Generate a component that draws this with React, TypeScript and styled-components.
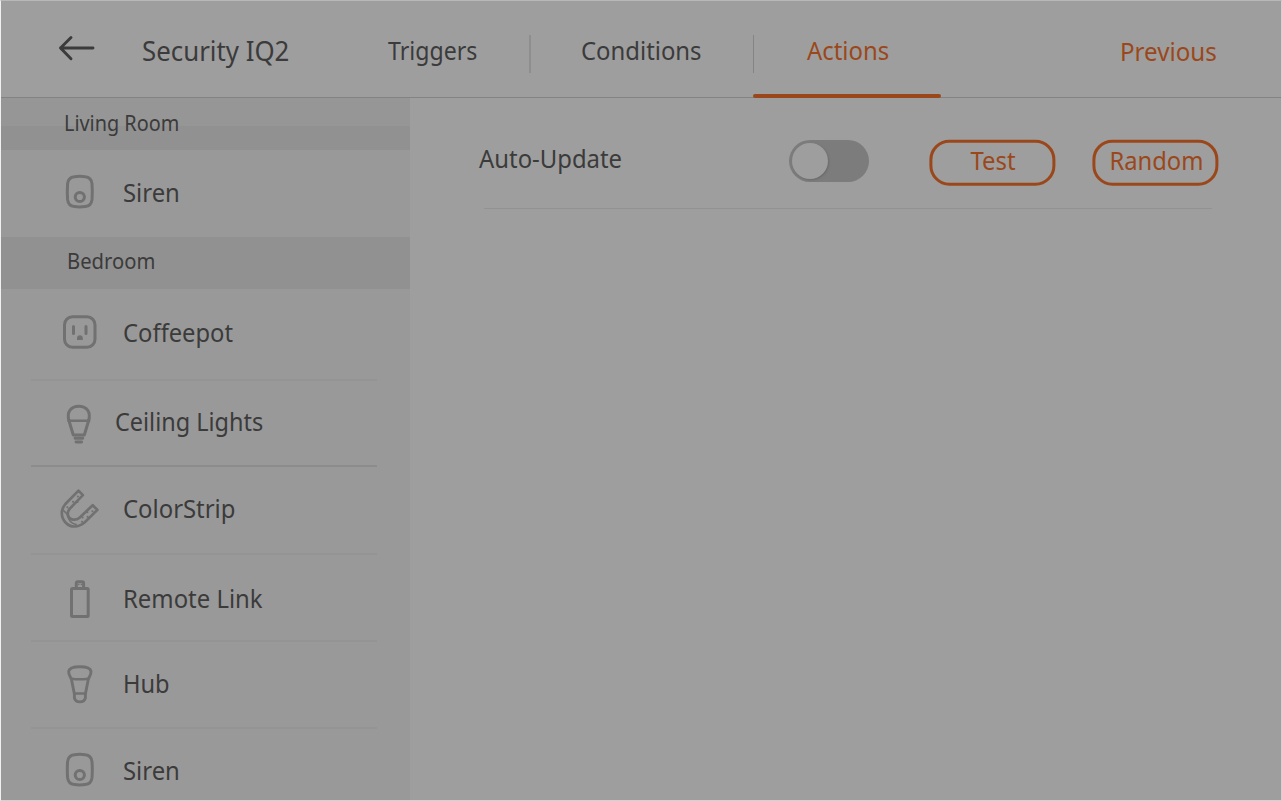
import React from 'react';
import styled, { createGlobalStyle } from 'styled-components';

const GlobalStyle = createGlobalStyle`
  * { box-sizing: border-box; }
  html, body { margin: 0; padding: 0; overflow: hidden; }
  body { background: #d9d9d9; font-family: 'Noto Sans', 'Open Sans', sans-serif; }
`;

const ink = '#3b3b3b';
const accent = '#9a481b';
const iconGrey = '#717171';

const Screen = styled.div`
  width: 1282px;
  height: 801px;
  border: 1px solid #b8b8b8;
  border-left-color: #f0f0f0;
  border-right-color: #d2d2d2;
  border-bottom-color: #d2d2d2;
  background: #9e9e9e;
  display: flex;
  flex-direction: column;
  overflow: hidden;
`;

const Header = styled.header`
  height: 97px;
  flex: none;
  display: flex;
  border-bottom: 1px solid #838383;
`;

const Text = styled.span<{ $size?: number; $fit?: number; $accent?: boolean }>`
  display: block;
  flex: none;
  width: max-content;
  font-size: ${p => p.$size ?? 25}px;
  line-height: 36px;
  height: 36px;
  white-space: nowrap;
  color: ${p => (p.$accent ? accent : ink)};
  transform: translateY(0.4px) scaleX(${p => p.$fit ?? 0.955});
  transform-origin: 0 0;
`;

const BackButton = styled.div`
  width: 139px;
  padding: 33px 0 0 56px;
  flex: none;
  svg { display: block; }
`;

const Title = styled.div`
  width: 247px;
  padding: 32px 0 0 2px;
  flex: none;
`;

const Tab = styled.div<{ $width: number; $pad: number }>`
  width: ${p => p.$width}px;
  height: 96px;
  flex: none;
  padding: 31px 0 0 ${p => p.$pad}px;
`;

const TabDivider = styled.div<{ $wide?: boolean }>`
  width: ${p => (p.$wide ? 2 : 1)}px;
  height: 38px;
  margin: 34px 0 0;
  flex: none;
  background: ${p => (p.$wide ? '#8e8e8e' : '#858585')};
`;

const ActiveTab = styled.div`
  width: 188px;
  height: 97px;
  margin-left: -1px;
  flex: none;
  padding: 31px 0 0;
  display: flex;
  flex-direction: column;
  justify-content: space-between;
`;

const ActiveLabel = styled.div`
  padding-left: 54px;
`;

const Underline = styled.div`
  height: 4px;
  border-radius: 2px;
  background: ${accent};
`;

const Previous = styled.div`
  padding: 32px 0 0 179px;
`;

const Body = styled.div`
  flex: 1;
  min-height: 0;
  display: flex;
`;

const Sidebar = styled.aside`
  width: 409px;
  flex: none;
  background: #999999;
  overflow: hidden;
`;

const SectionHeader = styled.div<{ $split?: boolean; $pad: number }>`
  height: 52px;
  padding: ${p => (p.$split ? 7 : 6)}px 0 0 ${p => p.$pad}px;
  background: ${p => (p.$split ? 'linear-gradient(#969696 28px, #919191 28px)' : '#919191')};
`;

const Row = styled.div<{ $height: number }>`
  height: ${p => p.$height}px;
  display: flex;
  align-items: flex-start;
  padding-left: 54px;
`;

const IconSlot = styled.div<{ $top: number; $width?: number }>`
  width: ${p => p.$width ?? 68.4}px;
  flex: none;
  padding-top: ${p => p.$top}px;
  svg { display: block; }
`;

const RowLabel = styled.div<{ $top: number }>`
  padding-top: ${p => p.$top}px;
`;

const Rule = styled.div<{ $strong?: boolean }>`
  height: 2px;
  width: 346px;
  margin: -1px 0 -1px 30px;
  background: ${p => (p.$strong ? '#8c8c8c' : '#949494')};
`;

const Main = styled.main`
  flex: 1;
  padding: 42px 0 0 69px;
`;

const ActionRow = styled.div`
  display: flex;
  align-items: flex-start;
  height: 68px;
`;

const ActionName = styled.div`
  width: 310px;
  flex: none;
`;

const Toggle = styled.div`
  width: 80px;
  height: 42px;
  margin-right: 60px;
  flex: none;
  border-radius: 21px;
  background: #7c7c7c;
  padding: 3px 3px;
`;

const Knob = styled.div`
  width: 36px;
  height: 36px;
  border-radius: 50%;
  background: #9e9e9e;
  box-shadow: 1px 1px 2px #6b6b6b;
`;

const Pill = styled.div<{ $pad: number }>`
  width: 126px;
  height: 46px;
  margin-right: 37px;
  flex: none;
  border: 3px solid ${accent};
  border-radius: 20px;
  padding-left: ${p => p.$pad}px;
  transform: translate(0.4px, -0.3px);
  span { margin-top: -1px; }
`;

const ContentRule = styled.div`
  width: 728px;
  height: 1px;
  margin-left: 5px;
  background: #929292;
`;

const line = { fill: 'none', stroke: iconGrey, strokeWidth: 3, strokeLinejoin: 'round' as const, strokeLinecap: 'round' as const };

const ArrowIcon = () => (
  <svg width="40" height="28" viewBox="0 0 40 28" fill="none" stroke={ink} strokeWidth="2.9" strokeLinecap="round" strokeLinejoin="round">
    <path d="M36 14H3.500M14 3.500 3.500 14 14 24.800" />
  </svg>
);

const SirenIcon = () => (
  <svg width="50" height="40" viewBox="0 0 50 40" {...line}>
    <path d="M19.300 4.700q5.500-.7 11 0 6 .6 6.700 7 .6 8 0 16-.7 6.300-6.700 6.900-5.500.8-11 0-6-.6-6.700-6.900-.6-8 0-16 .7-6.400 6.700-7Z" />
    <circle cx="24.800" cy="25" r="4.600" />
  </svg>
);

const OutletIcon = () => (
  <svg width="50" height="40" viewBox="0 0 50 40" {...line}>
    <rect x="9.500" y="4.800" width="30.500" height="30.400" rx="8" />
    <path d="M18.500 14.500v7M31 14.500v7" />
    <path d="M22 28v-1.900a2.900 2.900 0 0 1 5.800 0v1.900Z" fill={iconGrey} stroke="none" />
  </svg>
);

const BulbIcon = () => (
  <svg width="50" height="46" viewBox="0 0 50 46" {...line}>
    <path d="M18.300 34 13.900 19.500C11.500 11 16 5.200 23.800 5.200S36.100 11 33.700 19.500L29.300 34Z" />
    <path d="M13.500 19.700h20.600" strokeWidth="2.400" />
    <path d="M20 37.300h7.800M21 41h5.600" strokeWidth="2.900" />
  </svg>
);

const StripIcon = () => (
  <svg width="50" height="46" viewBox="0 0 50 46" {...line} strokeWidth="2.700">
    <path d="M23.500 4.600 27.900 9.100 14.800 22.600C11 27.500 12.800 32.300 17 33.400C20 34.200 22.700 33.300 24.800 31.400L37.700 19.200 42.400 23.900 29.800 36.300C23 42 15.500 41.600 11 37C5.700 31.500 5.400 24 10.400 18Z" />
    <path d="M8.500 24.500 13.500 29.500M13 30C13.500 34 16.500 37.500 21 38.500" strokeWidth="1.700" />
    <path d="M22.800 10.500h.1M18 15.700h.1M22.500 16h.1M16.800 21.100h.1M12.300 21.300h.1M37.400 25.200h.1M32.300 26.300h.1M32.500 30.700h.1M27.600 31.400h.1M27 35.800h.1" strokeWidth="2" />
  </svg>
);

const LinkIcon = () => (
  <svg width="50" height="46" viewBox="0 0 50 46" {...line}>
    <rect x="16.500" y="11.600" width="16.700" height="28" rx="1" />
    <path d="M21.300 11V6.200q0-1.400 1.400-1.400h4.500q1.400 0 1.400 1.400V11" />
    <path d="M23.700 7.500h.1M26.300 7.500h.1" strokeWidth="1.500" />
  </svg>
);

const SpotIcon = () => (
  <svg width="50" height="46" viewBox="0 0 50 46" {...line} strokeWidth="2.900">
    <path d="M13.700 10.300C14.700 4.200 35 4.200 36 10.300C36.300 13.500 34.300 15.500 33.300 18.300L30.400 33V36.700c-1 5.600-10 5.600-11 0V33L16.400 18.300C15.400 15.500 13.400 13.500 13.700 10.300Z" />
    <path d="M16.300 17.700q8.500 1.300 17 0M19.500 32.600h10.800" strokeWidth="2.500" />
  </svg>
);

interface Device {
  name: string;
  icon: React.ReactNode;
  height: number;
  iconTop: number;
  labelTop: number;
  fit?: number;
  inset?: number;
  rule?: 'soft' | 'strong';
}

const livingRoom: Device[] = [
  { name: 'Siren', icon: <SirenIcon />, height: 87, iconTop: 22, labelTop: 24 },
];

const bedroom: Device[] = [
  { name: 'Coffeepot', icon: <OutletIcon />, height: 91, iconTop: 23, labelTop: 25, fit: 0.95, rule: 'soft' },
  { name: 'Ceiling Lights', icon: <BulbIcon />, height: 86, iconTop: 21, labelTop: 23, fit: 0.938, inset: 60.4, rule: 'strong' },
  { name: 'ColorStrip', icon: <StripIcon />, height: 88, iconTop: 20, labelTop: 24, rule: 'soft' },
  { name: 'Remote Link', icon: <LinkIcon />, height: 87, iconTop: 23, labelTop: 26, rule: 'soft' },
  { name: 'Hub', icon: <SpotIcon />, height: 87, iconTop: 20, labelTop: 24, fit: 0.945, rule: 'soft' },
  { name: 'Siren', icon: <SirenIcon />, height: 87, iconTop: 22, labelTop: 24 },
];

const DeviceRow = ({ device }: { device: Device }) => (
  <>
    <Row $height={device.height}>
      <IconSlot $top={device.iconTop} $width={device.inset}>{device.icon}</IconSlot>
      <RowLabel $top={device.labelTop}>
        <Text $fit={device.fit}>{device.name}</Text>
      </RowLabel>
    </Row>
    {device.rule && <Rule $strong={device.rule === 'strong'} />}
  </>
);

export default function App() {
  return (
    <>
      <GlobalStyle />
      <Screen>
        <Header>
          <BackButton><ArrowIcon /></BackButton>
          <Title><Text $size={26.5} $fit={0.975}>Security IQ2</Text></Title>
          <Tab $width={142} $pad={1}><Text $fit={0.925}>Triggers</Text></Tab>
          <TabDivider $wide />
          <Tab $width={222} $pad={50}><Text>Conditions</Text></Tab>
          <TabDivider />
          <ActiveTab>
            <ActiveLabel><Text $accent>Actions</Text></ActiveLabel>
            <Underline />
          </ActiveTab>
          <Previous><Text $accent $fit={0.965}>Previous</Text></Previous>
        </Header>
        <Body>
          <Sidebar>
            <SectionHeader $split $pad={63}><Text $size={21} $fit={0.945}>Living Room</Text></SectionHeader>
            {livingRoom.map(d => <DeviceRow key={d.name} device={d} />)}
            <SectionHeader $pad={66}><Text $size={21} $fit={0.963}>Bedroom</Text></SectionHeader>
            {bedroom.map(d => <DeviceRow key={d.name} device={d} />)}
          </Sidebar>
          <Main>
            <ActionRow>
              <ActionName><Text>Auto-Update</Text></ActionName>
              <Toggle><Knob /></Toggle>
              <Pill $pad={37.5}><Text $accent>Test</Text></Pill>
              <Pill $pad={13.500}><Text $accent $fit={0.95}>Random</Text></Pill>
            </ActionRow>
            <ContentRule />
          </Main>
        </Body>
      </Screen>
    </>
  );
}
